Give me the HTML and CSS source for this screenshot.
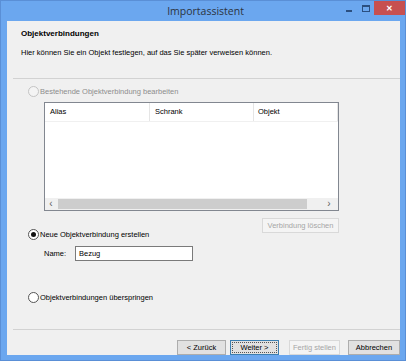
FILE: index.html
```html
<!DOCTYPE html>
<html lang="de">
<head>
  <meta charset="UTF-8" />
  <title>Importassistent</title>
  <link rel="stylesheet" href="styles.css">
</head>
<body>

<div class="window">
  <div class="titlebar">
    <span class="title">Importassistent</span>
    <div class="controls">
      <span class="btn-min"></span>
      <span class="btn-max"></span>
      <span class="btn-close">&#x2715;</span>
    </div>
  </div>

  <div class="content">
    <div class="header">
      <div class="heading">Objektverbindungen</div>
      <div class="subheading">Hier können Sie ein Objekt festlegen, auf das Sie später verweisen können.</div>
    </div>
    <hr class="sep">

    <label class="radio disabled first">
      <span class="circle"></span>Bestehende Objektverbindung bearbeiten
    </label>

    <div class="listview">
      <div class="list-head">
        <div class="col col-alias">Alias</div>
        <div class="col col-schrank">Schrank</div>
        <div class="col col-objekt">Objekt</div>
      </div>
      <div class="list-body"></div>
      <div class="hscroll">
        <span class="arrow">&lsaquo;</span>
        <span class="thumb"></span>
        <span class="arrow">&rsaquo;</span>
      </div>
    </div>

    <div class="delete-row">
      <button class="winbtn disabled delete">Verbindung löschen</button>
    </div>

    <label class="radio second">
      <span class="circle checked"></span>Neue Objektverbindung erstellen
    </label>

    <div class="name-row">
      <span class="name-label">Name:</span>
      <div class="textbox">Bezug</div>
    </div>

    <label class="radio third">
      <span class="circle"></span>Objektverbindungen überspringen
    </label>

    <hr class="sep bottom">

    <div class="footer">
      <button class="winbtn">&lt; Zurück</button>
      <button class="winbtn focused">Weiter &gt;</button>
      <button class="winbtn disabled">Fertig stellen</button>
      <button class="winbtn">Abbrechen</button>
    </div>
  </div>
</div>

</body>
</html>
```

FILE: styles.css
```css
body {
  margin: 0;
  padding: 0;
  font-family: "Liberation Sans", Arial, sans-serif;
  font-size: 7.5px;
  color: #000;
}
.window {
  width: 406px;
  height: 361px;
  box-sizing: border-box;
  background-color: #6ba7ef;
  border: 1px solid #5a8fd6;
  padding: 0 5px 5px 6px;
  display: flex;
  flex-direction: column;
}
.titlebar {
  height: 21px;
  position: relative;
  display: flex;
  align-items: center;
  justify-content: center;
}
.title {
  font-family: "Open Sans", sans-serif;
  font-size: 10.5px;
  color: #2b3440;
  margin-left: 4px;
}
.controls {
  position: absolute;
  right: -5px;
  top: 0;
  display: flex;
  align-items: flex-start;
}
.btn-min {
  width: 6px;
  height: 2px;
  background-color: #2b4f80;
  margin-top: 9px;
  margin-right: 10px;
}
.btn-max {
  width: 6px;
  height: 4px;
  border: 1px solid #2b4f80;
  border-top-width: 2px;
  margin-top: 4px;
  margin-right: 4px;
}
.btn-close {
  width: 31px;
  height: 14px;
  background-color: #c75050;
  color: #fff;
  font-size: 8px;
  font-weight: bold;
  display: flex;
  align-items: center;
  justify-content: center;
}
.content {
  flex: 1;
  background-color: #f0f0f0;
  display: flex;
  flex-direction: column;
}
.header {
  height: 57px;
  padding-left: 14px;
  box-sizing: border-box;
}
.heading {
  font-weight: bold;
  font-size: 8px;
  line-height: 9px;
  padding-top: 8px;
}
.subheading {
  line-height: 9px;
  margin-top: 10px;
}
.sep {
  margin: 0 0 0 6px;
  border: 0;
  border-top: 1px solid #d2d2d2;
  height: 0;
}
.radio {
  display: flex;
  align-items: center;
  height: 12px;
  padding-left: 21px;
}
.radio.first {
  margin-top: 6px;
}
.radio.disabled {
  color: #8d8d8d;
}
.circle {
  width: 9px;
  height: 9px;
  border: 1px solid #555;
  border-radius: 50%;
  background-color: #fff;
  margin-right: 1px;
  display: flex;
  align-items: center;
  justify-content: center;
}
.radio.disabled .circle {
  border-color: #c4c4c4;
  background-color: #f4f4f4;
}
.circle.checked::after {
  content: "";
  width: 5px;
  height: 5px;
  border-radius: 50%;
  background-color: #111;
}
.listview {
  margin: 5px 0 0 37px;
  width: 295px;
  height: 109px;
  box-sizing: border-box;
  border: 1px solid #828790;
  background-color: #fff;
  display: flex;
  flex-direction: column;
}
.list-head {
  display: flex;
  height: 18px;
  border-bottom: 1px solid #f0f0f0;
}
.col {
  padding-left: 5px;
  line-height: 18px;
  border-right: 1px solid #e5e5e5;
  box-sizing: border-box;
}
.col-alias {
  width: 105px;
}
.col-schrank {
  width: 104px;
}
.col-objekt {
  width: 84px;
  padding-left: 4px;
}
.list-body {
  flex: 1;
}
.hscroll {
  height: 12px;
  background-color: #f0f0f0;
  display: flex;
  align-items: center;
}
.arrow {
  width: 12px;
  text-align: center;
  font-size: 10px;
  line-height: 12px;
  color: #606060;
}
.thumb {
  width: 249px;
  height: 10px;
  background-color: #cdcdcd;
  margin: 0 0 0 1px;
}
.hscroll .arrow:last-child {
  margin-left: auto;
  margin-right: 3px;
}
.delete-row {
  display: flex;
  justify-content: flex-end;
  width: 332px;
  margin-top: 7px;
}
.winbtn {
  font-family: "Liberation Sans", Arial, sans-serif;
  font-size: 7.5px;
  height: 15px;
  padding: 0;
  margin: 0;
  background-color: #e1e1e1;
  border: 1px solid #adadad;
  color: #000;
}
.winbtn.disabled {
  background-color: #f4f4f4;
  border-color: #d9d9d9;
  color: #a6a6a6;
}
.winbtn.focused {
  border-color: #3c7fb1;
  outline: 1px dotted #555;
  outline-offset: -3px;
}
.delete {
  width: 77px;
}
.radio.second {
  margin-top: -5px;
}
.name-row {
  display: flex;
  align-items: center;
  margin-top: 6px;
  padding-left: 37px;
}
.name-label {
  width: 31px;
}
.textbox {
  width: 118px;
  height: 15px;
  box-sizing: border-box;
  border: 1px solid #7a7a7a;
  background-color: #fff;
  padding-left: 3px;
  line-height: 13px;
}
.radio.third {
  margin-top: 30px;
}
.sep.bottom {
  margin-top: 26px;
}
.footer {
  display: flex;
  justify-content: flex-end;
  gap: 4px;
  margin-top: 10px;
}
.footer .winbtn {
  width: 49px;
}
.footer .winbtn:nth-child(3) {
  width: 51px;
  margin-left: 6px;
  margin-right: 4px;
}
.footer .winbtn:last-child {
  width: 52px;
}
```
